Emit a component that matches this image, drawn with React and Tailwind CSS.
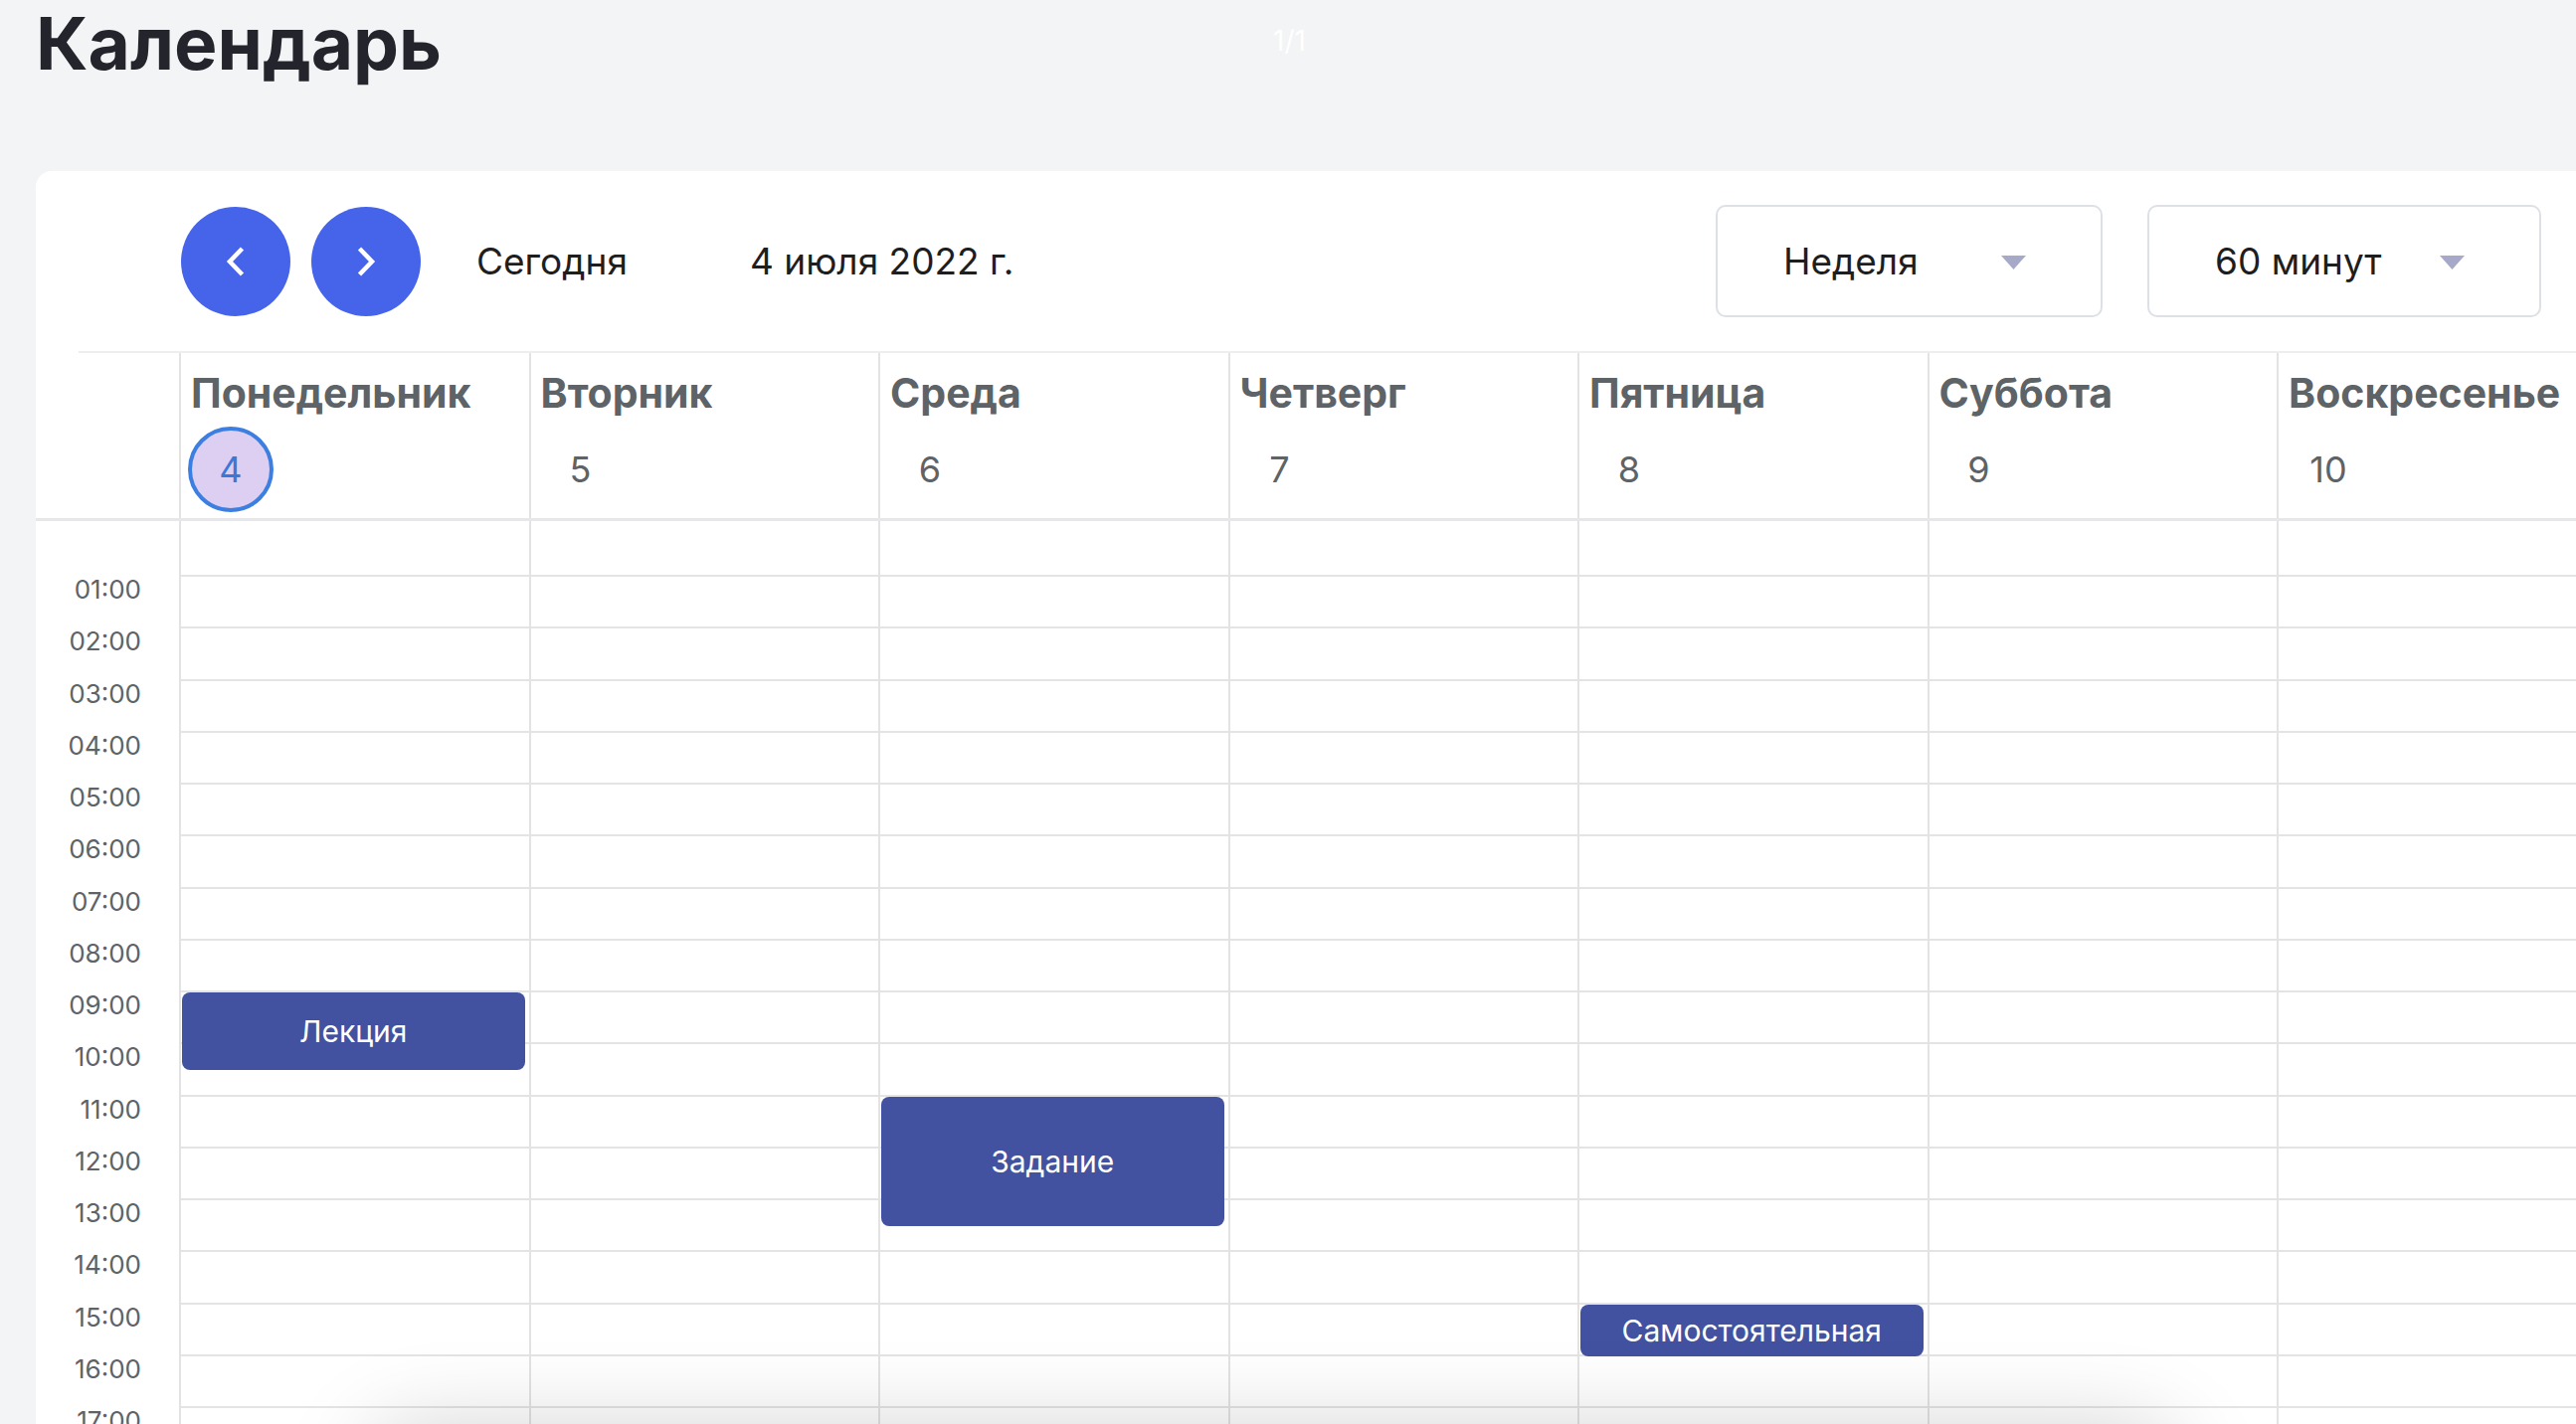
import React from "react";

const DAYS = [
  { name: "Понедельник", num: 4, today: true },
  { name: "Вторник", num: 5 },
  { name: "Среда", num: 6 },
  { name: "Четверг", num: 7 },
  { name: "Пятница", num: 8 },
  { name: "Суббота", num: 9 },
  { name: "Воскресенье", num: 10 },
];

const EVENTS = {
  0: [{ title: "Лекция", start: 9, dur: 1.5 }],
  2: [{ title: "Задание", start: 11, dur: 2.5 }],
  4: [{ title: "Самостоятельная", start: 15, dur: 1 }],
};

const ROW = 52.25;
const FIRST = 56;
const HOURS = Array.from({ length: 22 }, (_, i) => i + 1);

function Chevron({ dir }) {
  return (
    <svg width="20" height="30" viewBox="0 0 20 30">
      <polyline
        points={dir === "left" ? "16.5,2 4,15 16.5,28" : "3.5,2 16,15 3.5,28"}
        fill="none"
        stroke="white"
        strokeWidth="4.5"
      />
    </svg>
  );
}

function Caret() {
  return (
    <svg width="25" height="14" viewBox="0 0 25 14" className="mt-[3px]">
      <polygon points="0,0 25,0 12.5,14" fill="#a7a9c9" />
    </svg>
  );
}

function Select({ label, width }) {
  return (
    <div
      className={`${width} h-[113px] border-2 border-[#dde0e5] rounded-[10px] flex items-center justify-between pl-[66px] pr-[75px] bg-white`}
    >
      <span className="text-[37px] leading-none text-[#1e1e1e]">{label}</span>
      <Caret />
    </div>
  );
}

export default function App() {
  return (
    <div className="relative w-[2590px] h-[1432px] overflow-hidden bg-[#f3f4f6] font-['Inter','Noto_Sans',sans-serif]">
      <div className="h-[172px] pl-[36px] pt-[7px]">
        <h1 className="text-[73px] leading-none font-bold text-[#24242c]">Календарь</h1>
      </div>
      <div className="absolute left-[1280px] top-[27px] text-[28px] leading-none text-white">
        1/1
      </div>

      <div className="ml-[36px] w-[2620px] h-[1300px] bg-white rounded-tl-[16px]">
        {/* toolbar */}
        <div className="h-[181px] flex items-center pl-[146px] pr-[101px]">
          <button className="w-[110px] h-[110px] rounded-full bg-[#4664e9] flex items-center justify-center">
            <Chevron dir="left" />
          </button>
          <button className="ml-[21px] w-[110px] h-[110px] rounded-full bg-[#4664e9] flex items-center justify-center">
            <Chevron dir="right" />
          </button>
          <span className="ml-[56px] w-[275px] text-[37px] leading-none text-[#1e1e1e]">
            Сегодня
          </span>
          <span className="text-[37px] leading-none text-[#1e1e1e]">4 июля 2022 г.</span>
          <div className="ml-auto flex gap-[45px]">
            <Select label="Неделя" width="w-[389px]" />
            <Select label="60 минут" width="w-[396px]" />
          </div>
        </div>
        <div className="ml-[43px] h-[2px] bg-[#eceef0]" />

        {/* day header */}
        <div className="flex border-b-[3px] border-[#e5e7ea]">
          <div className="w-[144px] shrink-0" />
          {DAYS.map((d) => (
            <div
              key={d.name}
              className="w-[351.5px] shrink-0 border-l-2 border-[#e3e3e3] pt-[20px] pb-[6px] pl-[7px]"
            >
              <div className="text-[41px] h-[40px] leading-[40px] font-bold text-[#5d6367] whitespace-nowrap pl-[3px]">
                {d.name}
              </div>
              <div
                className={
                  d.today
                    ? "mt-[14px] w-[86px] h-[86px] rounded-full border-4 border-[#3d7fe0] bg-[#dccff2] flex items-center justify-center text-[36px] leading-none text-[#3a78d8]"
                    : "mt-[14px] w-[86px] h-[86px] rounded-full flex items-center justify-center text-[36px] leading-none text-[#5d6367]"
                }
              >
                {d.num}
              </div>
            </div>
          ))}
        </div>

        {/* body */}
        <div className="flex">
          <div className="w-[144px] shrink-0">
            <div className="h-[56px]" />
            {HOURS.map((h) => (
              <div
                key={h}
                className="h-[52.25px] text-right pr-[38px] text-[26px] leading-none text-[#5d6367]"
              >
                {String(h).padStart(2, "0")}:00
              </div>
            ))}
          </div>
          {DAYS.map((d, di) => (
            <div
              key={d.name}
              className="relative w-[351.5px] shrink-0 border-l-2 border-[#e3e3e3]"
            >
              <div className="h-[56px] border-b-2 border-[#e4e4e4]" />
              {HOURS.map((h) => (
                <div key={h} className="h-[52.25px] border-b-2 border-[#e4e4e4]" />
              ))}
              {(EVENTS[di] || []).map((ev) => (
                <div
                  key={ev.title}
                  className="absolute left-[1px] right-[4px] rounded-[8px] bg-[#4252a0] flex items-center justify-center text-[30px] leading-none text-white"
                  style={{
                    top: FIRST + (ev.start - 1) * ROW,
                    height: ev.dur * ROW,
                  }}
                >
                  {ev.title}
                </div>
              ))}
            </div>
          ))}
        </div>
      </div>

      {/* shadow of a floating element below the viewport */}
      <div className="absolute left-[380px] top-[1448px] w-[1800px] h-[80px] rounded-[40px] bg-white shadow-[0_0_90px_12px_rgba(0,0,0,0.18)]" />
    </div>
  );
}
